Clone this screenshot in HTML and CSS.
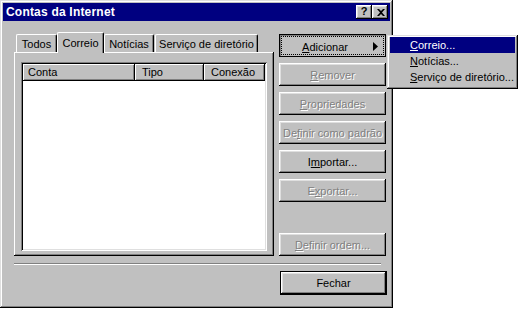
FILE: index.html
```html
<!DOCTYPE html>
<html lang="pt">
<head>
    <meta charset="UTF-8">
    <title>Contas da Internet</title>
    <link rel="stylesheet" href="styles.css">
</head>
<body>
    <div class="dialog">
        <div class="titlebar">
            <span class="title">Contas da Internet</span>
            <div class="caption-btns">
                <span class="cap-btn help">?</span>
                <span class="cap-btn close">
                    <svg width="8" height="7" viewBox="0 0 8 7"><path d="M0 0h2l2 2 2-2h2l-3 3.5 3 3.5h-2l-2-2-2 2h-2l3-3.5z" fill="#000"/></svg>
                </span>
            </div>
        </div>
        <div class="main">
            <div class="left">
                <div class="tabs">
                    <div class="tab tab-todos">Todos</div>
                    <div class="tab tab-correio active">Correio</div>
                    <div class="tab tab-noticias">Notícias</div>
                    <div class="tab tab-servico">Serviço de diretório</div>
                </div>
                <div class="panel">
                    <div class="list">
                        <div class="list-head">
                            <div class="col col-conta">Conta</div>
                            <div class="col col-tipo">Tipo</div>
                            <div class="col col-conexao">Conexão</div>
                        </div>
                    </div>
                </div>
            </div>
            <div class="actions">
                <div class="btn pressed">
                    <span class="focus"></span>
                    <span class="label"><u>A</u>dicionar</span>
                    <svg class="arrow" width="5" height="9" viewBox="0 0 5 9"><path d="M0 0l5 4.5-5 4.5z" fill="#000"/></svg>
                </div>
                <div class="btn disabled"><u>R</u>emover</div>
                <div class="btn disabled"><u>P</u>ropriedades</div>
                <div class="btn disabled">De<u>f</u>inir como padrão</div>
                <div class="btn">I<u>m</u>portar...</div>
                <div class="btn disabled">E<u>x</u>portar...</div>
                <div class="btn disabled spaced"><u>D</u>efinir ordem...</div>
            </div>
        </div>
        <div class="separator"></div>
        <div class="footer">
            <div class="btn default">Fechar</div>
        </div>
    </div>

    <div class="menu">
        <div class="menu-item selected"><u>C</u>orreio...</div>
        <div class="menu-item"><u>N</u>otícias...</div>
        <div class="menu-item"><u>S</u>erviço de diretório...</div>
    </div>
</body>
</html>
```

FILE: styles.css
```css
body {
    margin: 0;
    background: #fff;
    font-family: 'Liberation Sans', Arial, sans-serif;
    font-size: 11px;
    color: #000;
}
u {
    text-decoration: underline;
    text-underline-offset: 1px;
}
.dialog {
    width: 393px;
    height: 308px;
    box-sizing: border-box;
    padding: 3px;
    background: #c0c0c0;
    box-shadow: inset -1px -1px #000, inset 1px 1px #dfdfdf, inset -2px -2px #808080, inset 2px 2px #fff;
    display: flex;
    flex-direction: column;
}
.titlebar {
    height: 18px;
    background: #000080;
    display: flex;
    align-items: center;
    justify-content: space-between;
    padding: 0 2px 0 3px;
}
.title {
    color: #fff;
    font-weight: bold;
    font-size: 12px;
    letter-spacing: 0.2px;
}
.caption-btns {
    display: flex;
}
.cap-btn {
    width: 16px;
    height: 14px;
    box-sizing: border-box;
    background: #c0c0c0;
    box-shadow: inset -1px -1px #000, inset 1px 1px #fff, inset -2px -2px #808080, inset 2px 2px #dfdfdf;
    display: flex;
    align-items: center;
    justify-content: center;
    font-weight: bold;
    font-size: 11px;
    line-height: 1;
}
.cap-btn.help {
    padding-bottom: 1px;
}
.cap-btn.close svg {
    margin-left: 1px;
}
.main {
    display: flex;
    margin-top: 11px;
}
.left {
    width: 260px;
    margin-left: 11px;
    display: flex;
    flex-direction: column;
}
.tabs {
    display: flex;
    align-items: flex-end;
    height: 20px;
    padding-left: 2px;
    position: relative;
    z-index: 1;
}
.tab {
    height: 18px;
    box-sizing: border-box;
    border-top: 1px solid #fff;
    border-left: 1px solid #fff;
    border-right: 1px solid #000;
    border-radius: 2px 2px 0 0;
    box-shadow: inset -1px 0 #808080;
    background: #c0c0c0;
    display: flex;
    align-items: center;
    justify-content: center;
    padding-top: 1px;
}
.tab-todos { width: 41px; }
.tab-correio { width: 47px; }
.tab-noticias { width: 50px; }
.tab-servico { width: 103px; margin-left: 1px; }
.tab.active {
    height: 21px;
    margin-bottom: -1px;
    padding-bottom: 2px;
}
.panel {
    height: 204px;
    box-sizing: border-box;
    background: #c0c0c0;
    box-shadow: inset -1px -1px #000, inset 1px 1px #fff, inset -2px -2px #808080;
    padding: 10px 7px 0 7px;
}
.list {
    height: 189px;
    box-sizing: border-box;
    background: #fff;
    box-shadow: inset 1px 1px #808080, inset -1px -1px #fff, inset 2px 2px #000, inset -2px -2px #dfdfdf;
    padding: 2px;
}
.list-head {
    display: flex;
    height: 17px;
}
.col {
    box-sizing: border-box;
    height: 17px;
    background: #c0c0c0;
    box-shadow: inset -1px -1px #000, inset 1px 1px #fff, inset -2px -2px #808080;
    padding-left: 5px;
    line-height: 16px;
}
.col-conta { width: 112px; }
.col-tipo { width: 69px; padding-left: 7px; }
.col-conexao { flex: 1; padding-left: 7px; }
.actions {
    margin-left: 5px;
    padding-top: 2px;
    width: 107px;
    display: flex;
    flex-direction: column;
    gap: 6px;
}
.btn {
    position: relative;
    height: 23px;
    box-sizing: border-box;
    background: #c0c0c0;
    box-shadow: inset -1px -1px #000, inset 1px 1px #fff, inset -2px -2px #808080, inset 2px 2px #dfdfdf;
    display: flex;
    align-items: center;
    justify-content: center;
    white-space: nowrap;
}
.btn.disabled {
    color: #808080;
    text-shadow: 1px 1px 0 #fff;
}
.btn.spaced {
    margin-top: 25px;
}
.btn.pressed {
    box-shadow: inset 0 0 0 1px #000, inset 2px 2px #808080;
    padding: 2px 0 0 0;
}
.btn.pressed .label {
    margin-left: -15px;
}
.btn.pressed .focus {
    position: absolute;
    top: 2px;
    left: 2px;
    right: 2px;
    bottom: 2px;
    border: 1px dotted #000;
}
.btn .arrow {
    position: absolute;
    right: 8px;
    top: 8px;
}
.separator {
    height: 2px;
    margin: 7px 9px 0 11px;
    border-top: 1px solid #808080;
    border-bottom: 1px solid #fff;
    box-sizing: border-box;
}
.footer {
    display: flex;
    justify-content: flex-end;
    margin-top: 6px;
    padding-right: 3px;
}
.btn.default {
    width: 107px;
    height: 24px;
    box-shadow: inset 0 0 0 1px #000, inset -2px -2px #000, inset 2px 2px #fff, inset -3px -3px #808080, inset 3px 3px #dfdfdf;
}
.menu {
    position: absolute;
    left: 387px;
    top: 35px;
    width: 131px;
    height: 54px;
    box-sizing: border-box;
    padding: 2px 3px;
    background: #c0c0c0;
    box-shadow: inset -1px -1px #000, inset 1px 1px #dfdfdf, inset -2px -2px #808080, inset 2px 2px #fff;
}
.menu-item {
    height: 16px;
    line-height: 16px;
    padding-left: 20px;
    white-space: nowrap;
}
.menu-item.selected {
    background: #000080;
    color: #fff;
}
```
